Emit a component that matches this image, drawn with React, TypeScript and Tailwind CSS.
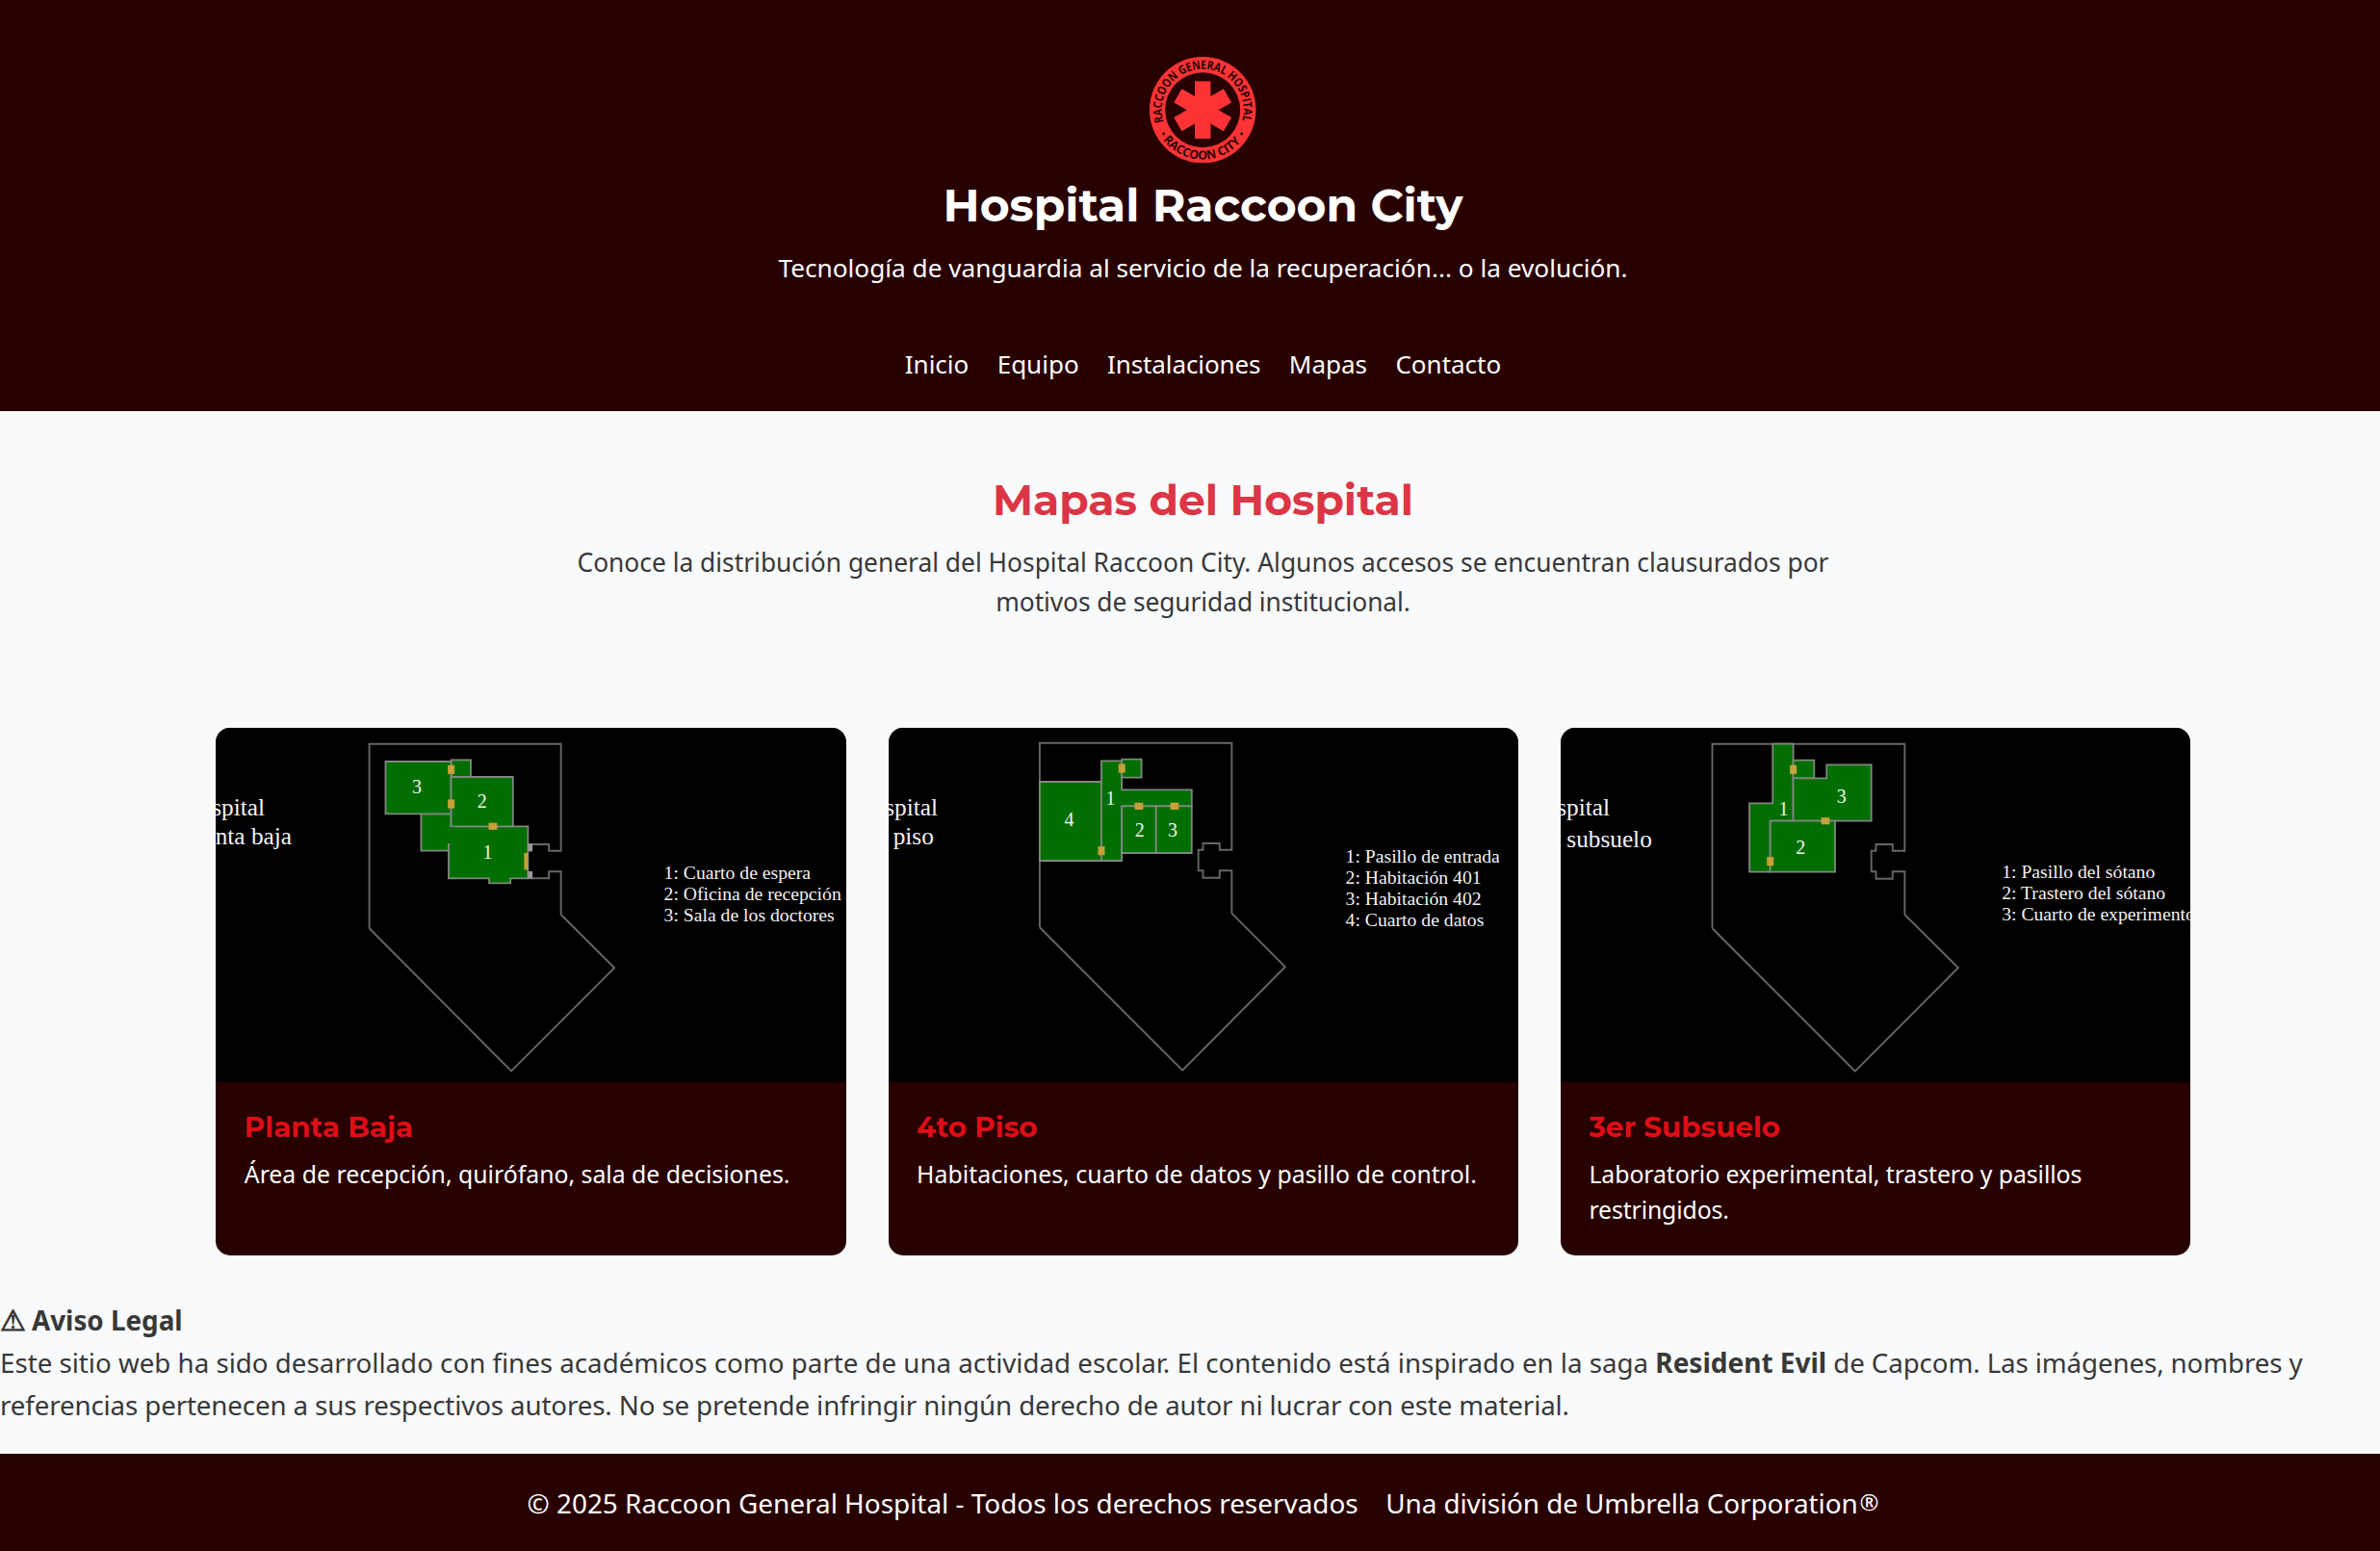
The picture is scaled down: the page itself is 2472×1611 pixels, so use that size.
type Point = [number, number];
type Label = { x: number; y: number; text: string };
type Door = { x: number; y: number; vertical?: boolean };
type Line = { text: string; tracking: string };

type FloorPlan = {
  title: string;
  lines: Line[];
  walls: string[];
  rooms: string[];
  doors: Door[];
  numbers: Label[];
  heading: Label[];
  legend: Label[];
  extra?: "entrance";
};

const DARK = "#280000";

const floors: FloorPlan[] = [
  {
    title: "Planta Baja",
    lines: [{ text: "Área de recepción, quirófano, sala de decisiones.", tracking: "tracking-normal" }],
    walls: [
      "M159.6 208.3 V16.7 H358.7 V127.7 H346.1 V121 H324.4",
      "M324.4 156.3 H346.1 V149.3 H358.7 V194",
      "M358.7 194 L414.2 249.3 L307.1 356.5 L159.6 208.3",
    ],
    rooms: [
      "M213.4 89.3 H244.6 V127.7 H213.4 Z",
      "M244.6 33.3 H265 V51 H244.6 Z",
      "M176.5 35 H244.6 V89.3 H176.5 Z",
      "M242 120 V156.3 H284.1 V161.3 H306.2 V156.3 H324.4 V102.3 H244.6",
      "M244.6 51 H308.8 V102.3 H244.6 Z",
    ],
    doors: [
      { x: 244.6, y: 43.3, vertical: true },
      { x: 244.6, y: 79, vertical: true },
      { x: 288, y: 102.3 },
    ],
    numbers: [
      { x: 209, y: 68.3, text: "3" },
      { x: 276.9, y: 82.7, text: "2" },
      { x: 282.6, y: 135.7, text: "1" },
    ],
    heading: [
      { x: 51, y: 91, text: "Hospital" },
      { x: 79, y: 120.6, text: "Planta baja" },
    ],
    legend: [
      { x: 465.6, y: 157.3, text: "1: Cuarto de espera" },
      { x: 465.6, y: 179.3, text: "2: Oficina de recepción" },
      { x: 465.6, y: 201, text: "3: Sala de los doctores" },
    ],
    extra: "entrance",
  },
  {
    title: "4to Piso",
    lines: [{ text: "Habitaciones, cuarto de datos y pasillo de control.", tracking: "tracking-[0.06px]" }],
    walls: [
      "M156.9 207.3 V15.7 H356.4 V126.7 H343.8 V120 H326.5 V126.7 H321.7 V148.3 H326.5 V155.7 H343.8 V148.3 H356.4 V192.7",
      "M356.4 192.7 L411.9 248.3 L305.2 355.7 L156.9 207.3",
    ],
    rooms: [
      "M156.9 56 H221 V138 H156.9 Z",
      "M221 34.3 H242.2 V64.3 H314.8 V81.3 H242.2 V138 H221 Z",
      "M242.2 32.7 H262.6 V51.7 H242.2 Z",
      "M242.2 81.3 H277.8 V130 H242.2 Z",
      "M277.8 81.3 H314.8 V130 H277.8 Z",
    ],
    doors: [
      { x: 242.2, y: 42, vertical: true },
      { x: 221, y: 127.7, vertical: true },
      { x: 260, y: 81.3 },
      { x: 297, y: 81.3 },
    ],
    numbers: [
      { x: 187.6, y: 102.3, text: "4" },
      { x: 230.6, y: 79.7, text: "1" },
      { x: 260.8, y: 113.3, text: "2" },
      { x: 295, y: 113.3, text: "3" },
    ],
    heading: [
      { x: 51, y: 91, text: "Hospital" },
      { x: 46.8, y: 121.3, text: "piso" },
    ],
    legend: [
      { x: 474.6, y: 140.2, text: "1: Pasillo de entrada" },
      { x: 474.6, y: 162, text: "2: Habitación 401" },
      { x: 474.6, y: 184, text: "3: Habitación 402" },
      { x: 474.6, y: 206, text: "4: Cuarto de datos" },
    ],
  },
  {
    title: "3er Subsuelo",
    lines: [
      { text: "Laboratorio experimental, trastero y pasillos", tracking: "tracking-[-0.07px]" },
      { text: "restringidos.", tracking: "tracking-[-0.12px]" },
    ],
    walls: [
      "M157.5 208.3 V16.7 H357.4 V127.7 H344.8 V121 H327.5 V127.7 H322.7 V149.3 H327.5 V156.7 H344.8 V149.3 H357.4 V194",
      "M357.4 194 L412.9 249.3 L305.8 356.7 L157.5 208.3",
    ],
    rooms: [
      "M220.3 16.7 H241.6 V96.7 H217.7 V149.7 H196.1 V78.3 H220.3 Z",
      "M241.6 33.7 H263.3 V52.3 H241.6 Z",
      "M241.6 52.3 H276.3 V38.3 H322.7 V96.7 H241.6 Z",
      "M217.7 96.7 H285 V149.7 H217.7 Z",
    ],
    doors: [
      { x: 241.6, y: 43.3, vertical: true },
      { x: 217.7, y: 138.7, vertical: true },
      { x: 275, y: 96.7 },
    ],
    numbers: [
      { x: 231.6, y: 91, text: "1" },
      { x: 291.9, y: 77.7, text: "3" },
      { x: 249.4, y: 131, text: "2" },
    ],
    heading: [
      { x: 51, y: 91, text: "Hospital" },
      { x: 94.8, y: 123.8, text: "subsuelo" },
    ],
    legend: [
      { x: 458.2, y: 156.3, text: "1: Pasillo del sótano" },
      { x: 458.2, y: 178.3, text: "2: Trastero del sótano" },
      { x: 458.2, y: 200, text: "3: Cuarto de experimentos" },
    ],
  },
];

function Logo() {
  const dots: Point[] = [
    [14.6, 80],
    [95.7, 80],
  ];
  return (
    <svg viewBox="0 0 110.4 110.4" className="block size-[110.4px]">
      <defs>
        <path id="arc-top" d="M14.56 67.63 A42.5 42.5 0 1 1 95.84 67.63" />
        <path id="arc-bottom" d="M14.3 86.3 A51.4 51.4 0 0 0 96.1 86.3" />
      </defs>
      <circle cx="55.2" cy="55.2" r="55.2" fill="#ff3336" />
      <circle cx="55.2" cy="55.2" r="39" fill={DARK} />
      {[0, 60, 120].map((angle) => (
        <rect key={angle} x="47" y="25.4" width="16.4" height="59.6" fill="#ff3336" transform={`rotate(${angle} 55.2 55.2)`} />
      ))}
      <g fill={DARK} className="font-['Open_Sans',sans-serif] text-[12.5px] font-bold">
        <text textLength="157" lengthAdjust="spacingAndGlyphs">
          <textPath href="#arc-top">RACCOON GENERAL HOSPITAL</textPath>
        </text>
        <text textLength="92" lengthAdjust="spacingAndGlyphs">
          <textPath href="#arc-bottom">RACCOON CITY</textPath>
        </text>
      </g>
      {dots.map(([x, y]) => (
        <circle key={x} cx={x} cy={y} r="1.4" fill={DARK} />
      ))}
    </svg>
  );
}

function FloorMap({ plan }: { plan: FloorPlan }) {
  return (
    <svg viewBox="0 0 654.4 368.4" className="block h-[368.4px] w-full bg-black font-['Liberation_Serif',serif]">
      <g fill="none" stroke="#666666" strokeWidth="1.9">
        {plan.walls.map((d) => (
          <path key={d} d={d} />
        ))}
      </g>
      <g fill="#006e00" stroke="#808880" strokeWidth="1.8">
        {plan.rooms.map((d) => (
          <path key={d} d={d} />
        ))}
      </g>
      {plan.extra === "entrance" && (
        <g>
          <rect x="243.4" y="103.2" width="6" height="24" fill="#006e00" />
          <path d="M242 120 V128" stroke="#808880" strokeWidth="1.8" />
          <rect x="320.4" y="130" width="4" height="17.4" fill="#c8a038" />
          <rect x="324.6" y="120.4" width="4.6" height="8" fill="#999999" />
          <rect x="324.6" y="149" width="4.6" height="7.6" fill="#999999" />
        </g>
      )}
      <g fill="#c8a038">
        {plan.doors.map(({ x, y, vertical }) => (
          <rect
            key={`${x}-${y}`}
            x={x - (vertical ? 3.5 : 4.4)}
            y={y - (vertical ? 4.6 : 3.6)}
            width={vertical ? 7 : 8.8}
            height={vertical ? 9.2 : 7.2}
          />
        ))}
      </g>
      <g fill="#f2f2f2">
        {plan.numbers.map((l) => (
          <text key={l.text} x={l.x} y={l.y} textAnchor="middle" fontSize="20">
            {l.text}
          </text>
        ))}
        {plan.heading.map((l) => (
          <text key={l.text} x={l.x} y={l.y} textAnchor="end" fontSize="25.3">
            {l.text}
          </text>
        ))}
        {plan.legend.map((l) => (
          <text key={l.text} x={l.x} y={l.y} fontSize="19.7">
            {l.text}
          </text>
        ))}
      </g>
    </svg>
  );
}

export default function App() {
  return (
    <div className="h-[1611px] w-full overflow-hidden bg-[#f8fafc] font-['Noto_Sans',sans-serif] text-[#383838]">
      <div className="flex h-full w-[2499px] flex-col">
        <header className="flex h-[427px] flex-col items-center bg-[#280000] pt-[58.8px] text-white">
          <Logo />
          <h1 className="mt-[16.3px] font-['Montserrat',sans-serif] text-[47.2px] leading-[56px] font-bold">Hospital Raccoon City</h1>
          <p className="mt-4 text-[26.2px] leading-[42px] tracking-[0.01px]">
            Tecnología de vanguardia al servicio de la recuperación... o la evolución.
          </p>
          <nav className="mt-[57.5px] flex gap-[29.4px] text-[26px] leading-[42px]">
            {["Inicio", "Equipo", "Instalaciones", "Mapas", "Contacto"].map((item) => (
              <a key={item} href="#" className={item === "Instalaciones" ? "tracking-[-0.1px]" : undefined}>
                {item}
              </a>
            ))}
          </nav>
        </header>

        <main>
          <section className="pt-[66.2px] text-center">
            <h2 className="font-['Montserrat',sans-serif] text-[44.1px] leading-[52px] font-bold text-[#dc3545]">Mapas del Hospital</h2>
            <p className="mt-[18.6px] text-[26.35px] leading-[41.2px]">
              Conoce la distribución general del Hospital Raccoon City. Algunos accesos se encuentran clausurados por
              <br />
              <span className="tracking-[-0.08px]">motivos de seguridad institucional.</span>
            </p>
          </section>

          <section className="mt-[109.4px] ml-[224.4px] grid w-[2051px] grid-cols-3 gap-[44px]">
            {floors.map((plan) => (
              <article key={plan.title} className="h-[548.2px] overflow-hidden rounded-[15px] bg-[#280000]">
                <FloorMap plan={plan} />
                <div className="px-[29.4px] pt-[28.8px]">
                  <h3 className="font-['Montserrat',sans-serif] text-[29.4px] leading-9 font-bold text-[#df0d17]">{plan.title}</h3>
                  <p className="mt-[12.7px] text-[24.8px] leading-[36.7px] text-white">
                    {plan.lines.map(({ text, tracking }) => (
                      <span key={text} className={`block whitespace-nowrap ${tracking}`}>
                        {text}
                      </span>
                    ))}
                  </p>
                </div>
              </article>
            ))}
          </section>

          <section className="mt-[45px] text-[27.7px] leading-[44px] whitespace-nowrap">
            <div className="flex h-[44px]">
              <span className="w-[33px] text-[30px] font-bold">⚠</span>
              <strong className="text-[27.8px]">Aviso Legal</strong>
            </div>
            <p>
              Este sitio web ha sido desarrollado con fines académicos como parte de una actividad escolar. El contenido está inspirado en la
              saga <strong className="text-[28px]">Resident Evil</strong>
              <span className="tracking-[-0.1px]"> de Capcom. Las imágenes, nombres y</span>
              <br />
              <span className="tracking-[-0.12px]">
                referencias pertenecen a sus respectivos autores. No se pretende infringir ningún derecho de autor ni lucrar con este material.
              </span>
            </p>
          </section>
        </main>

        <footer className="mt-auto flex h-[101px] justify-center gap-[28.6px] bg-[#280000] pt-[29.3px] text-[27.9px] leading-[44px] whitespace-nowrap text-white">
          <p>© 2025 Raccoon General Hospital - Todos los derechos reservados</p>
          <p className="tracking-[-0.1px]">
            Una división de Umbrella Corporation<span className="ml-[2px] align-[3px] text-[24px] leading-none">®</span>
          </p>
        </footer>
      </div>
    </div>
  );
}
